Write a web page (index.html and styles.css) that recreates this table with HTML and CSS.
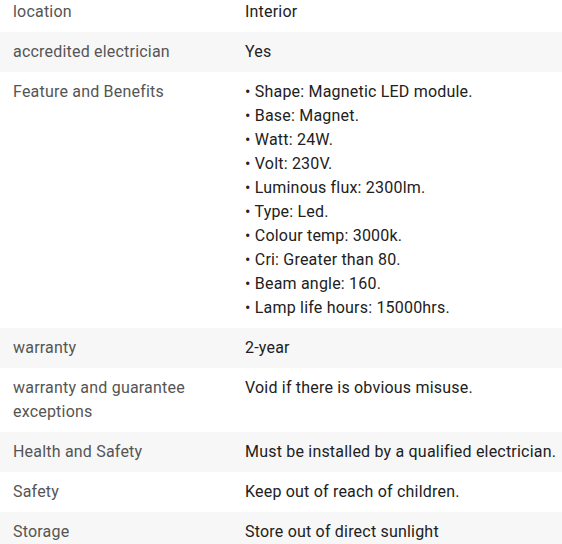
FILE: index.html
```html
<!DOCTYPE html>
<html>
<head>
<meta charset="utf-8">
<link rel="stylesheet" href="styles.css">
</head>
<body>
<table class="specs">
  <tbody>
    <tr><th>location</th><td>Interior</td></tr>
    <tr><th>accredited electrician</th><td>Yes</td></tr>
    <tr><th>Feature and Benefits</th><td>
      <ul class="bullets">
        <li>Shape: Magnetic LED module.</li>
        <li>Base: Magnet.</li>
        <li>Watt: 24W.</li>
        <li>Volt: 230V.</li>
        <li>Luminous flux: 2300lm.</li>
        <li>Type: Led.</li>
        <li>Colour temp: 3000k.</li>
        <li>Cri: Greater than 80.</li>
        <li>Beam angle: 160.</li>
        <li>Lamp life hours: 15000hrs.</li>
      </ul>
    </td></tr>
    <tr><th>warranty</th><td>2-year</td></tr>
    <tr><th>warranty and guarantee exceptions</th><td>Void if there is obvious misuse.</td></tr>
    <tr><th>Health and Safety</th><td>Must be installed by a qualified electrician.</td></tr>
    <tr><th>Safety</th><td>Keep out of reach of children.</td></tr>
    <tr><th>Storage</th><td>Store out of direct sunlight</td></tr>
  </tbody>
</table>
</body>
</html>
```

FILE: styles.css
```css
html, body {
  margin: 0;
  padding: 0;
  background: #fff;
}
body {
  font-family: Roboto, "Liberation Sans", sans-serif;
  font-size: 16px;
  line-height: 24px;
  letter-spacing: 0.2px;
  overflow: hidden;
}
.specs {
  border-collapse: collapse;
  margin-top: -8px;
  width: 580px;
}
.specs th, .specs td {
  padding: 8px 12px;
  vertical-align: top;
  text-align: left;
  font-weight: 400;
}
.specs th {
  width: 208px;
  padding-left: 13px;
  color: #555;
}
.specs td {
  color: #212121;
  white-space: nowrap;
}
.specs tr:nth-child(even) {
  background: #f7f7f7;
}
.bullets {
  list-style: none;
  margin: 0;
  padding: 0;
}
.bullets li::before {
  content: "• ";
}
```
